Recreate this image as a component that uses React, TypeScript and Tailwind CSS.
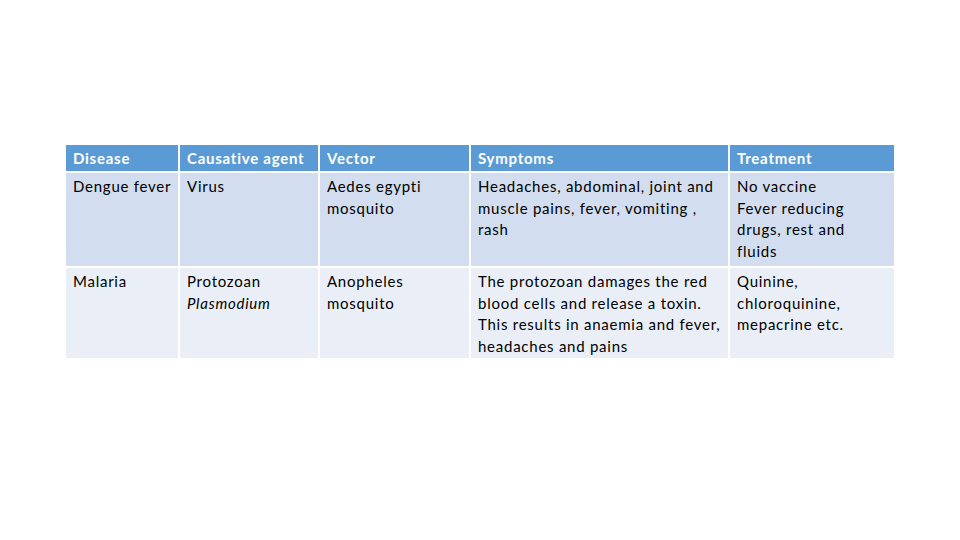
const headers = ["Disease", "Causative agent", "Vector", "Symptoms", "Treatment"];

const Cell = ({ children, bg }: { children: React.ReactNode; bg: string }) => (
  <div className={`${bg} pl-[7px] pt-[3px] text-[15px] leading-[21.7px] tracking-[0.75px] text-black whitespace-nowrap`}>
    {children}
  </div>
);

export default function App() {
  return (
    <div className="w-[960px] h-[540px] bg-white pt-[145px] pl-[66px]" style={{ fontFamily: "Lato, 'Open Sans', sans-serif" }}>
      <div className="grid grid-cols-[112px_138px_149px_257px_164px] grid-rows-[26px_93px_90px] gap-[2px] w-[828px]">
        {headers.map((h) => (
          <div key={h} className="bg-[#5b9bd5] pl-[7px] flex items-center text-white font-bold text-[15px] tracking-[0.75px]">
            {h}
          </div>
        ))}

        <Cell bg="bg-[#d2deef]">Dengue fever</Cell>
        <Cell bg="bg-[#d2deef]">Virus</Cell>
        <Cell bg="bg-[#d2deef]">Aedes egypti<br />mosquito</Cell>
        <Cell bg="bg-[#d2deef]">Headaches, abdominal, joint and<br />muscle pains, fever, vomiting ,<br />rash</Cell>
        <Cell bg="bg-[#d2deef]">No vaccine<br />Fever reducing<br />drugs, rest and<br />fluids</Cell>

        <Cell bg="bg-[#eaeff7]">Malaria</Cell>
        <Cell bg="bg-[#eaeff7]">Protozoan<br /><i>Plasmodium</i></Cell>
        <Cell bg="bg-[#eaeff7]">Anopheles<br />mosquito</Cell>
        <Cell bg="bg-[#eaeff7]">The protozoan damages the red<br />blood cells and release a toxin.<br />This results in anaemia and fever,<br />headaches and pains</Cell>
        <Cell bg="bg-[#eaeff7]">Quinine,<br />chloroquinine,<br />mepacrine etc.</Cell>
      </div>
    </div>
  );
}
